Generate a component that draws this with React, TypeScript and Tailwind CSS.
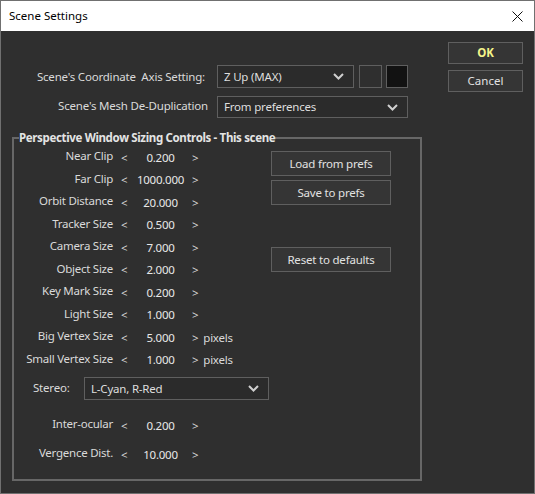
import React from "react";

const font = { fontFamily: '"Noto Sans", "Liberation Sans", sans-serif' };

const Chevron = () => (
  <svg width="11" height="7" viewBox="0 0 11 7" className="shrink-0">
    <polyline points="1,1 5.5,5.5 10,1" fill="none" stroke="#cfcfcf" strokeWidth="2" />
  </svg>
);

const Select = ({ value, className }: { value: string; className: string }) => (
  <div
    className={`flex items-center justify-between border border-[#5f5f5f] bg-[#2b2b2b] pl-[6px] pr-[9px] text-[11.5px] tracking-[-0.2px] text-[#dedede] ${className}`}
  >
    <span>{value}</span>
    <Chevron />
  </div>
);

const Button = ({ label, className = "" }: { label: string; className?: string }) => (
  <button
    type="button"
    className={`flex h-[25px] w-[120px] items-center justify-center border border-[#5f5f5f] bg-[#353535] text-[11.5px] tracking-[-0.2px] text-[#e2e2e2] ${className}`}
  >
    {label}
  </button>
);

// one "<  value  >" spinner row
const ValueRow = ({ label, value, unit }: { label: string; value: string; unit?: string }) => (
  <div className="flex h-[22.5px] items-center text-[11.5px] tracking-[-0.25px]">
    <span className="w-[99px] pb-[3px] text-right text-[#dadada]">{label}</span>
    <span className="ml-[8px] w-[8px] text-[#dadada]">&lt;</span>
    <span className="w-[63px] text-center text-[#e8e8e8]">{value}</span>
    <span className="text-[#dadada]">
      &gt;{unit ? <span className="ml-[5px]">{unit}</span> : null}
    </span>
  </div>
);

const rows = [
  { label: "Near Clip", value: "0.200" },
  { label: "Far Clip", value: "1000.000" },
  { label: "Orbit Distance", value: "20.000" },
  { label: "Tracker Size", value: "0.500" },
  { label: "Camera Size", value: "7.000" },
  { label: "Object Size", value: "2.000" },
  { label: "Key Mark Size", value: "0.200" },
  { label: "Light Size", value: "1.000" },
  { label: "Big Vertex Size", value: "5.000", unit: "pixels" },
  { label: "Small Vertex Size", value: "1.000", unit: "pixels" },
];

export default function App() {
  return (
    <div
      className="flex h-[494px] w-[535px] flex-col border border-[#707070] bg-[#2f2f2f] select-none"
      style={font}
    >
      {/* title bar */}
      <div className="flex h-[30px] shrink-0 items-center justify-between bg-white pl-[8px] pr-[11px]">
        <span className="text-[11.5px] text-black">Scene Settings</span>
        <svg width="11" height="11" viewBox="0 0 11 11">
          <path d="M0.5 0.5 L10.5 10.5 M10.5 0.5 L0.5 10.5" stroke="#111" strokeWidth="1" />
        </svg>
      </div>

      <div className="flex">
        {/* left side */}
        <div className="ml-[11px] flex w-[410px] flex-col pt-[34px]">
          <div className="flex h-[23px] items-center">
            <span className="w-[193px] text-right text-[11.5px] tracking-[-0.2px] text-[#dadada]">
              Scene's Coordinate&nbsp; Axis Setting:
            </span>
            <Select value="Z Up (MAX)" className="ml-[12px] h-[23px] w-[137px]" />
            <div className="ml-[5px] h-[23px] w-[23px] border border-[#5f5f5f] bg-[#2f2f2f]" />
            <div className="ml-[4px] h-[23px] w-[22px] border border-[#5f5f5f] bg-[#121212]" />
          </div>
          <div className="mt-[8px] flex h-[22px] items-center">
            <span className="w-[196px] pb-[3px] text-right text-[11.5px] tracking-[-0.2px] text-[#dadada]">
              Scene's Mesh De-Duplication
            </span>
            <Select value="From preferences" className="ml-[9px] h-[22px] w-[191px]" />
          </div>

          <fieldset className="mt-[11px] h-[352px] border-2 border-[#676767]">
            <legend className="ml-[5px] text-[11.5px] font-bold tracking-[-0.35px] text-[#e4e4e4]">
              Perspective Window Sizing Controls - This scene
            </legend>
            <div className="flex">
              <div className="flex w-[257px] flex-col">
                {rows.map((r) => (
                  <ValueRow key={r.label} {...r} />
                ))}
              </div>
              <div className="mt-[5px] flex flex-col gap-[4px]">
                <Button label="Load from prefs" />
                <Button label="Save to prefs" />
                <Button label="Reset to defaults" className="mt-[38px]" />
              </div>
            </div>

            <div className="mt-[6px] flex h-[23px] items-center">
              <span className="ml-[19px] w-[51px] pb-[2px] text-[11.5px] tracking-[-0.2px] text-[#dadada]">Stereo:</span>
              <Select value="L-Cyan, R-Red" className="h-[23px] w-[185px]" />
            </div>

            <div className="mt-[14px]">
              <ValueRow label="Inter-ocular" value="0.200" />
            </div>
            <div className="mt-[6.5px]">
              <ValueRow label="Vergence Dist." value="10.000" />
            </div>
          </fieldset>
        </div>

        {/* right side */}
        <div className="ml-[26px] flex flex-col gap-[6px] pt-[11px]">
          <button
            type="button"
            className="flex h-[22px] w-[75px] items-center justify-center border border-[#5f5f5f] bg-[#353535] text-[11.5px] font-bold text-[#f4f48a]"
          >
            OK
          </button>
          <button
            type="button"
            className="flex h-[22px] w-[75px] items-center justify-center border border-[#5f5f5f] bg-[#353535] text-[11.5px] text-[#e2e2e2]"
          >
            Cancel
          </button>
        </div>
      </div>
    </div>
  );
}
